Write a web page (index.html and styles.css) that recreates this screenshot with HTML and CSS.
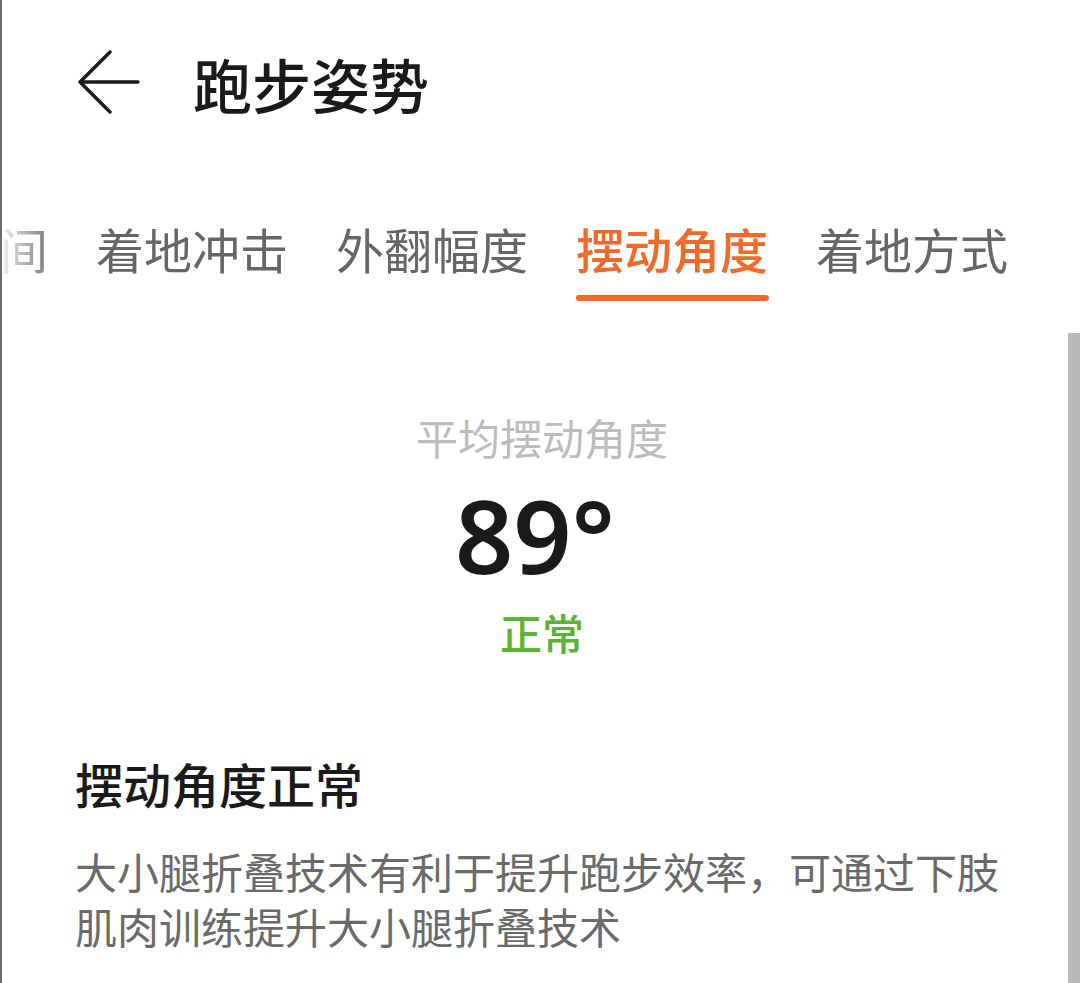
FILE: index.html
```html
<!DOCTYPE html>
<html lang="zh-CN">
<head>
    <meta charset="UTF-8">
    <meta name="viewport" content="width=device-width, initial-scale=1.0">
    <title>跑步姿势</title>
    <link rel="stylesheet" href="styles.css">
</head>
<body>
    <div class="page">
        <header class="topbar">
            <svg class="back" viewBox="0 0 64 72" width="64" height="72">
                <path d="M34 2 L4 32 L34 62 M4 32 L62 32" fill="none" stroke="#1a1a1a" stroke-width="3.4" stroke-linecap="round" stroke-linejoin="round"/>
            </svg>
            <h1>跑步姿势</h1>
        </header>

        <nav class="tabs">
            <div class="tab">触地时间</div>
            <div class="tab">着地冲击</div>
            <div class="tab">外翻幅度</div>
            <div class="tab active">摆动角度</div>
            <div class="tab">着地方式</div>
        </nav>

        <section class="summary">
            <div class="label">平均摆动角度</div>
            <div class="value">89°</div>
            <div class="status">正常</div>
        </section>

        <section class="advice">
            <h2>摆动角度正常</h2>
            <p>大小腿折叠技术有利于提升跑步效率，可通过下肢肌肉训练提升大小腿折叠技术</p>
        </section>

        <div class="scrollbar"></div>
    </div>
</body>
</html>
```

FILE: styles.css
```css
html, body {
    margin: 0;
    height: 100%;
    overflow: hidden;
    background-color: #ffffff;
}

body {
    font-family: "Noto Sans CJK SC", "Noto Sans", sans-serif;
    color: #1a1a1a;
}

.page {
    position: relative;
    height: 983px;
    border-left: 2px solid #6b6b6b;
    overflow: hidden;
}

.topbar {
    display: flex;
    align-items: center;
    height: 166px;
    padding-left: 74px;
    padding-bottom: 8px;
}

.back {
    display: block;
    margin-right: 53px;
    margin-top: 6px;
}

.topbar h1 {
    margin: 0;
    font-size: 59px;
    font-weight: 500;
    line-height: 1;
}

.tabs {
    display: flex;
    gap: 48px;
    margin-left: -146px;
    padding-top: 50px;
    height: 104px;
    white-space: nowrap;
    -webkit-mask-image: linear-gradient(to right, transparent 140px, #000 200px);
    mask-image: linear-gradient(to right, transparent 140px, #000 200px);
}

.tab {
    flex: none;
    position: relative;
    width: 192px;
    font-size: 48px;
    line-height: 48px;
    color: #666666;
}

.tab.active {
    color: #ef6a2b;
    font-weight: 500;
}

.tab.active::after {
    content: "";
    position: absolute;
    left: 0;
    right: -1px;
    top: 71px;
    height: 6px;
    border-radius: 3px;
    background-color: #ef6a2b;
}

.summary {
    display: flex;
    flex-direction: column;
    align-items: center;
    padding-top: 88px;
    padding-left: 2px;
}

.label {
    font-size: 42px;
    line-height: 42px;
    color: #bcbcbc;
}

.value {
    margin-top: 26px;
    margin-left: -14px;
    font-family: "Noto Sans", sans-serif;
    font-size: 102px;
    font-weight: 600;
    line-height: 102px;
    color: #1a1a1a;
}

.status {
    margin-top: 25px;
    font-size: 42px;
    line-height: 42px;
    font-weight: 500;
    color: #5ab334;
}

.advice {
    padding: 106px 0 0 73px;
    width: 945px;
}

.advice h2 {
    margin: 0;
    font-size: 48px;
    line-height: 48px;
    font-weight: 500;
    color: #1a1a1a;
}

.advice p {
    margin: 36px 0 0;
    font-size: 42px;
    line-height: 55px;
    color: #6a6a6a;
}

.scrollbar {
    position: absolute;
    top: 333px;
    right: 0;
    bottom: 0;
    width: 12px;
    background-color: #b9b9b9;
}
```
